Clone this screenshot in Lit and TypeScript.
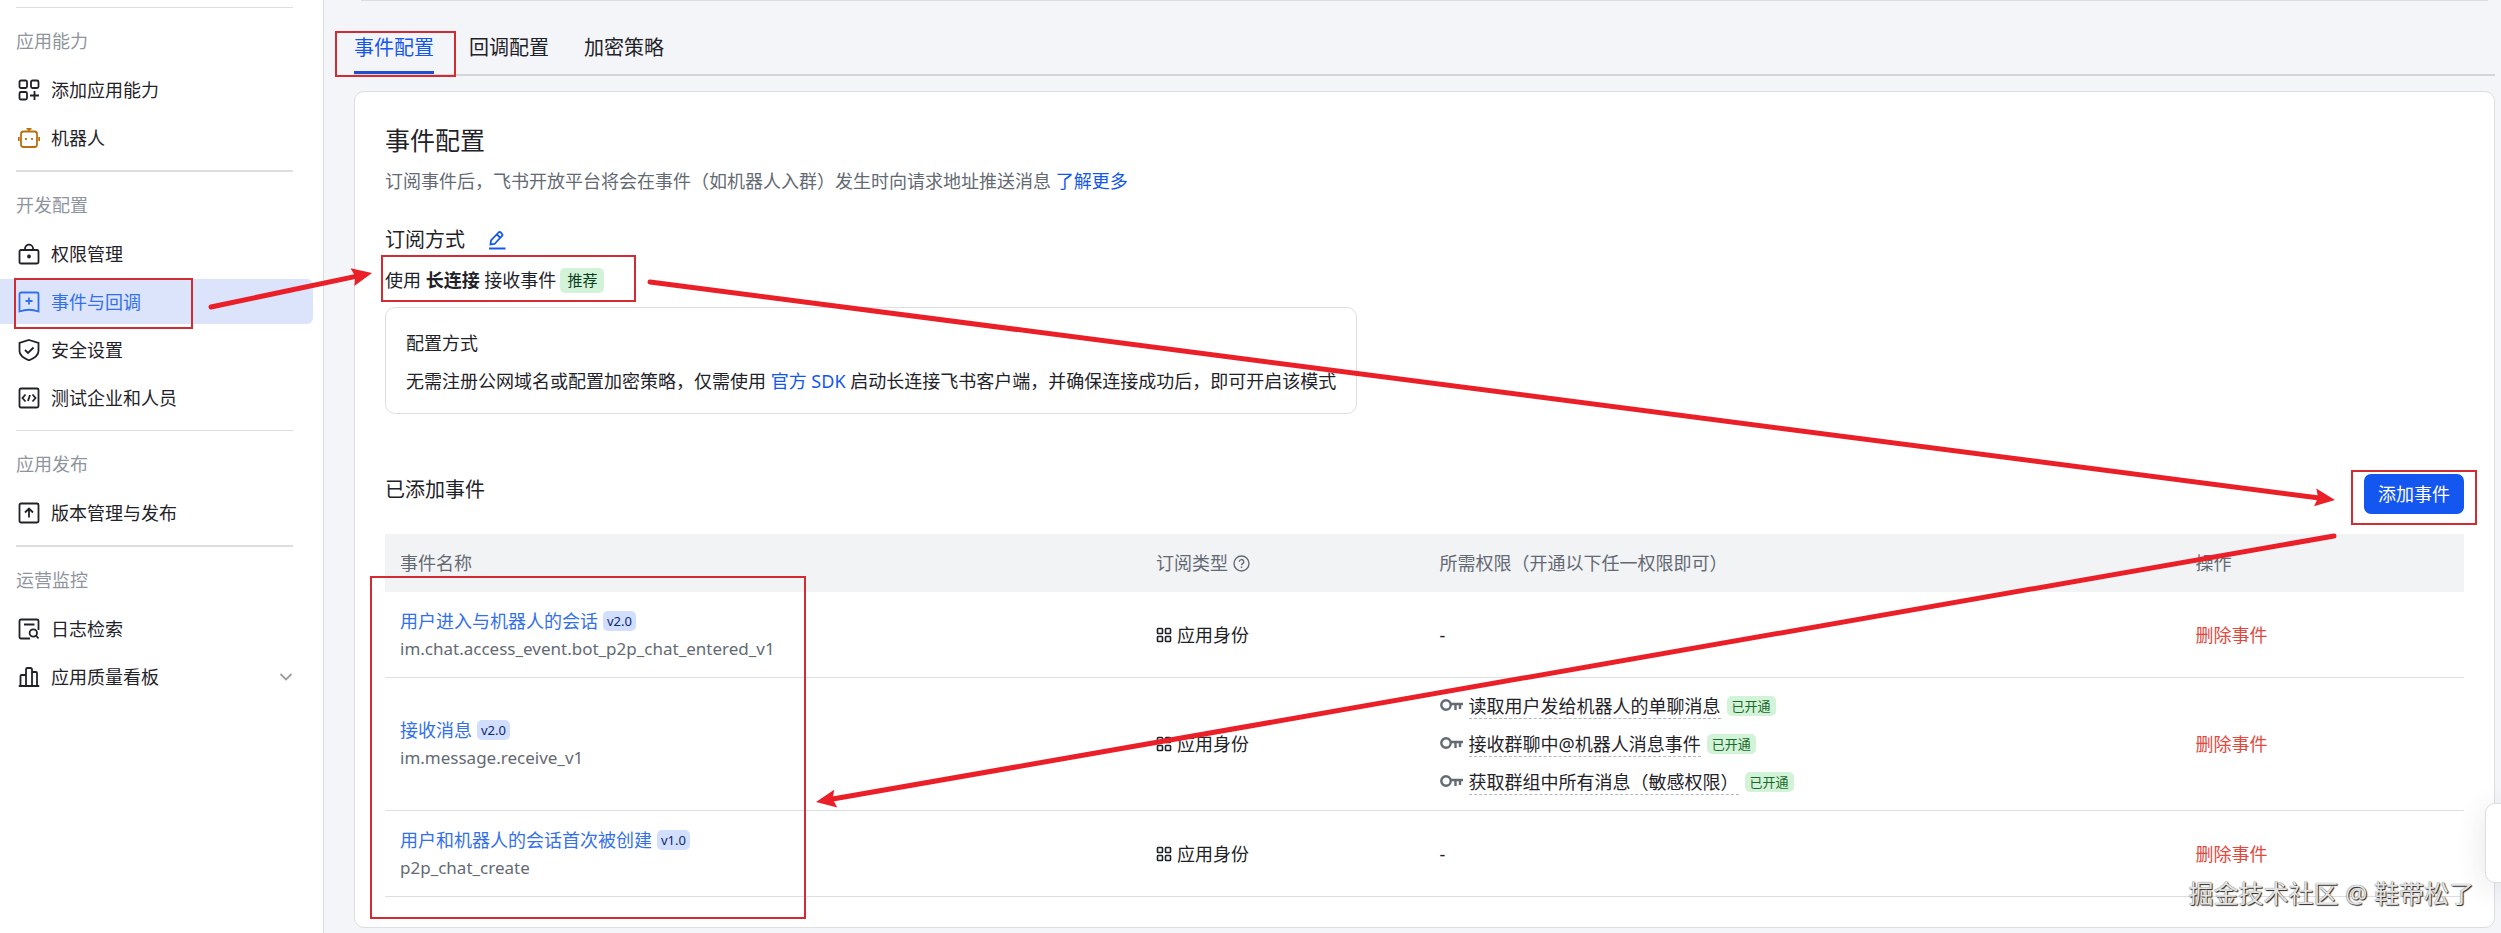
import { LitElement, html, css, svg, nothing } from "lit";
import { customElement } from "lit/decorators.js";

const icons: Record<string, unknown> = {
  add: svg`<rect x="1.500" y="1.500" width="7.500" height="7.500" rx="1.500"/><rect x="13" y="1.500" width="7.500" height="7.500" rx="1.500"/><rect x="1.500" y="13" width="7.500" height="7.500" rx="1.500"/><path d="M16.500 12v9M12 16.500h9"/>`,
  robot: svg`<rect x="3" y="4.500" width="16" height="15.500" rx="2.500"/><path d="M11 4.500V1.500M8.500 1.800h5M.8 10v4M21.200 10v4M8 11v2M14 11v2"/>`,
  lock: svg`<rect x="1.500" y="7" width="19" height="13.500" rx="1.500"/><path d="M7 7V5.500a4 3.800 0 0 1 8 0V7"/><circle cx="11" cy="13.500" r="1" fill="currentColor"/>`,
  event: svg`<path d="M1.500 20.500V3a1.500 1.500 0 0 1 1.500-1.500h16a1.500 1.500 0 0 1 1.500 1.500v17.500q-9.500-3.500-19 0zM11 6.500v7M7.500 10h7"/>`,
  shield: svg`<path d="M11 1l9.500 3v8c0 4.300-4.500 7.300-9.500 9.300-5-2-9.500-5-9.500-9.300V4zM7 11l3 3 5.500-5.500"/>`,
  code: svg`<rect x="1.500" y="1.500" width="19" height="19" rx="1.500"/><path d="M7.500 7.500L4.500 11l3 3.500M14.500 7.500l3 3.500-3 3.500M12 8l-2 6"/>`,
  upload: svg`<rect x="1.500" y="1.500" width="19" height="19" rx="1.500"/><path d="M11 15.500V7M7 10.500l4-4 4 4"/>`,
  log: svg`<path d="M12 20.500H3A1.500 1.500 0 0 1 1.500 19V3A1.500 1.500 0 0 1 3 1.500h16A1.500 1.500 0 0 1 20.500 3v9M6 6.500h10.500"/><circle cx="15.300" cy="15" r="3.700"/><path d="M18 17.500l2.500 3"/>`,
  chart: svg`<path d="M.8 20h20.400M2.500 20V10a1 1 0 0 1 1-1H8M8 20V3.500a1.500 1.500 0 0 1 1.500-1.500h3A1.500 1.500 0 0 1 14 3.500V20M14 6h4a1 1 0 0 1 1 1v13"/>`,
};

const groups = [
  { title: "应用能力", items: [["add", "添加应用能力"], ["robot", "机器人"]] },
  { title: "开发配置", items: [["lock", "权限管理"], ["event", "事件与回调"], ["shield", "安全设置"], ["code", "测试企业和人员"]] },
  { title: "应用发布", items: [["upload", "版本管理与发布"]] },
  { title: "运营监控", items: [["log", "日志检索"], ["chart", "应用质量看板"]] },
];

const events = [
  { name: "用户进入与机器人的会话", version: "v2.0", code: "im.chat.access_event.bot_p2p_chat_entered_v1", scopes: [] },
  { name: "接收消息", version: "v2.0", code: "im.message.receive_v1", scopes: ["读取用户发给机器人的单聊消息", "接收群聊中@机器人消息事件", "获取群组中所有消息（敏感权限）"] },
  { name: "用户和机器人的会话首次被创建", version: "v1.0", code: "p2p_chat_create", scopes: [] },
];

@customElement("side-nav")
class SideNav extends LitElement {
  static styles = css`
    :host { display: block; flex: 0 0 323px; background: #fff; border-right: 1px solid #d9dce1; padding-top: 7px; }
    .group { border-top: 1px solid #dcdee1; margin: 0 30px 0 16px; padding: 11px 0 10px; }
    .group:nth-of-type(even) { border-top-width: 2px; }
    h2 { margin: 0 0 3px; font-size: 18px; line-height: 45px; font-weight: 400; color: #8f959e; }
    ul { list-style: none; margin: 0 -20px 0 -16px; padding: 0; display: grid; gap: 3px; }
    a { display: flex; align-items: center; gap: 11px; height: 45px; padding: 0 20px 0 18px; font-size: 18px; color: #1f2329; text-decoration: none; border-radius: 0 6px 6px 0; }
    a.active { background: #dbe4fb; color: #3370eb; }
    svg { width: 22px; height: 22px; fill: none; stroke: currentColor; stroke-width: 1.8; }
    .robot { color: #b8700f; }
    .chev { width: 14px; height: 14px; margin-left: auto; color: #9a9da2; }
  `;
  render() {
    return html`<nav>${groups.map((g) => html`<section class="group"><h2>${g.title}</h2><ul>
      ${g.items.map(([icon, label]) => html`<li><a href="#" class=${icon === "event" ? "active" : ""}>
        <svg class=${icon} viewBox="0 0 22 22">${icons[icon]}</svg><span>${label}</span>
        ${icon === "chart" ? html`<svg class="chev" viewBox="0 0 14 14"><path d="M1.500 4l5.500 5.500L12.500 4"/></svg>` : nothing}
      </a></li>`)}</ul></section>`)}</nav>`;
  }
}

@customElement("event-table")
class EventTable extends LitElement {
  static styles = css`
    :host { display: block; }
    table { width: 100%; table-layout: fixed; border-collapse: separate; border-spacing: 0; font-size: 18px; }
    .wide { width: calc(100% * 8 / 22); }
    .slim { width: calc(100% * 3 / 22); }
    th { background: #f2f3f5; height: 58px; padding: 0 15px; text-align: left; font-weight: 400; color: #646a73; }
    td { height: 85px; padding: 0 15px; border-bottom: 1px solid #dcdee1; line-height: 28px; }
    .scopes { height: 132px; }
    .line { display: flex; align-items: center; gap: 5px; }
    .name { color: #3370eb; text-decoration: none; }
    .code { color: #646a73; font-size: 17px; }
    .version { background: #d1defd; color: #0c296e; font-size: 13px; line-height: 20px; padding: 0 4px; border-radius: 5px; }
    .open { background: #d2f3d8; color: #186a2a; font-size: 13px; line-height: 20px; padding: 0 5px; border-radius: 5px; }
    ul { list-style: none; margin: 0; padding: 0; display: grid; gap: 13px; }
    li { display: flex; align-items: center; gap: 6px; line-height: 24px; }
    .scope { border-bottom: 1px dashed #b5b9bf; }
    .delete { border: 0; background: none; padding: 0; font: inherit; color: #e2483d; }
    svg { fill: none; stroke: currentColor; }
    .grid { width: 16px; height: 16px; stroke-width: 1.6; }
    .key { width: 23px; height: 16px; stroke-width: 2.4; color: #646a73; }
    .help { width: 17px; height: 17px; stroke-width: 1.4; }
  `;
  render() {
    return html`<table>
      <colgroup><col class="wide" /><col class="slim" /><col class="wide" /><col class="slim" /></colgroup>
      <thead><tr>
        <th>事件名称</th>
        <th><div class="line">订阅类型<svg class="help" viewBox="0 0 17 17"><circle cx="8.500" cy="8.500" r="7.500"/><path d="M6.300 6.800a2.200 2.200 0 1 1 3.300 1.900c-.8.500-1.100.8-1.100 1.600M8.500 11.500v1.400"/></svg></div></th>
        <th>所需权限（开通以下任一权限即可）</th>
        <th>操作</th>
      </tr></thead>
      <tbody>${events.map((e) => html`<tr>
        <td><div class="line"><a class="name" href="#">${e.name}</a><span class="version">${e.version}</span></div><div class="code">${e.code}</div></td>
        <td><div class="line"><svg class="grid" viewBox="0 0 16 16"><rect x="1.500" y="1.500" width="5" height="5" rx=".8"/><rect x="9.500" y="1.500" width="5" height="5" rx=".8"/><rect x="1.500" y="9.500" width="5" height="5" rx=".8"/><rect x="9.500" y="9.500" width="5" height="5" rx=".8"/></svg>应用身份</div></td>
        ${e.scopes.length
          ? html`<td class="scopes"><ul>${e.scopes.map((s) => html`<li><svg class="key" viewBox="0 0 23 16"><circle cx="6" cy="7" r="4.700"/><path d="M10.700 6H23M15.500 6v6M20 6v5"/></svg><span class="scope">${s}</span><span class="open">已开通</span></li>`)}</ul></td>`
          : html`<td>-</td>`}
        <td><button class="delete" type="button">删除事件</button></td>
      </tr>`)}</tbody>
    </table>`;
  }
}

@customElement("guide-marks")
class GuideMarks extends LitElement {
  static styles = css`
    :host { position: absolute; inset: 0; pointer-events: none; }
    svg { display: block; width: 2501px; height: 933px; }
    .box { fill: none; stroke: #d22b31; stroke-width: 2; }
    .shaft { stroke: #ea1f28; stroke-width: 5; stroke-linecap: round; }
    .head { fill: #ea1f28; }
  `;
  boxes = [[15, 279, 177, 49], [336, 32, 119, 44], [382, 256, 253, 45], [2352, 471, 124, 53], [371, 577, 434, 341]];
  arrows = [[211, 307, 372, 273], [650, 282, 2335, 500], [2334, 536, 816, 802]];
  render() {
    return html`<svg viewBox="0 0 2501 933" aria-hidden="true">
      ${this.boxes.map(([x, y, w, h]) => svg`<rect class="box" x=${x} y=${y} width=${w} height=${h}/>`)}
      ${this.arrows.map(([x1, y1, x2, y2]) => {
        const a = Math.atan2(y2 - y1, x2 - x1);
        const turn = (a * 180) / Math.PI;
        return svg`<line class="shaft" x1=${x1} y1=${y1} x2=${x2 - 14 * Math.cos(a)} y2=${y2 - 14 * Math.sin(a)}/>
          <path class="head" d="M0 0L-20 -9L-17 0L-20 9Z" transform="translate(${x2} ${y2}) rotate(${turn})"/>`;
      })}
    </svg>`;
  }
}

@customElement("app-root")
class AppRoot extends LitElement {
  static styles = css`
    :host { display: flex; position: relative; min-height: 100vh; overflow: hidden; background: #f4f5f8; color: #1f2329; font-family: "Noto Sans", "Noto Sans CJK SC", sans-serif; font-size: 18px; line-height: 28px; }
    main { flex: 1; min-width: 0; padding: 0 6px 5px 30px; display: flex; flex-direction: column; }
    .prev { height: 1px; margin: 0 7px; background: #dadcdf; }
    .tabs { display: flex; gap: 35px; border-bottom: 2px solid #d3d5d8; padding-top: 20px; margin-bottom: 15px; }
    .tab { font-size: 20px; line-height: 53px; color: #1f2329; text-decoration: none; }
    .tab.on { color: #1456f0; background: linear-gradient(#1f4fd0, #1f4fd0) bottom / 100% 3px no-repeat; }
    .card { background: #fff; border: 1px solid #dcdee1; border-radius: 10px; padding: 30px; }
    h1 { margin: 0; font-size: 25px; line-height: 36px; font-weight: 400; }
    h2 { margin: 0; font-size: 20px; line-height: 32px; font-weight: 400; }
    p { margin: 0; }
    .desc { color: #646a73; padding-top: 9px; }
    .link { color: #1456f0; text-decoration: none; }
    .mode { display: flex; align-items: center; gap: 22px; padding-top: 29px; }
    .edit { border: 0; padding: 0; background: none; color: #1456f0; width: 20px; height: 20px; }
    .edit svg { display: block; width: 20px; height: 20px; fill: none; stroke: currentColor; stroke-width: 1.8; }
    .use { display: flex; align-items: center; gap: 4px; padding-top: 10px; }
    .rec { background: #d2f3d8; color: #0b3d1c; font-size: 15px; line-height: 25px; padding: 0 7px; border-radius: 5px; }
    .config { width: fit-content; box-sizing: border-box; min-width: 970px; margin-top: 13px; border: 1px solid #dcdee1; border-radius: 10px; padding: 21px 20px 18px; display: grid; gap: 10px; }
    .bar { display: flex; align-items: flex-start; justify-content: space-between; margin: 60px 0 20px; }
    .add { border: 0; border-radius: 7px; background: #1456f0; color: #fff; font: inherit; height: 40px; padding: 0 14px; }
    .float { position: absolute; right: -10px; top: 803px; width: 24px; height: 78px; background: #fff; border: 1px solid #dcdee1; border-radius: 10px; box-shadow: 0 5px 30px rgba(31, 35, 41, 0.12); }
    .mark { position: absolute; right: 27px; top: 874px; font-size: 25px; line-height: 38px; color: #e4e4e4; text-shadow: 1px 1px 1px #222, 0 0 1px #555; }
  `;
  render() {
    return html`<side-nav></side-nav>
      <main>
        <div class="prev"></div>
        <nav class="tabs"><a class="tab on" href="#">事件配置</a><a class="tab" href="#">回调配置</a><a class="tab" href="#">加密策略</a></nav>
        <section class="card">
          <h1>事件配置</h1>
          <p class="desc">订阅事件后，飞书开放平台将会在事件（如机器人入群）发生时向请求地址推送消息 <a class="link" href="#">了解更多</a></p>
          <div class="mode"><h2>订阅方式</h2><button class="edit" type="button" aria-label="编辑"><svg viewBox="0 0 20 20"><path d="M3.500 14.500L4 10.500 11.500 2.500a1.500 1.500 0 0 1 2.200 0l1.300 1.300a1.500 1.500 0 0 1 0 2.200L7.500 14zM10 4.500L13 7.500M2 18.500h16.500"/></svg></button></div>
          <div class="use"><span>使用 <b>长连接</b> 接收事件</span><span class="rec">推荐</span></div>
          <div class="config"><p>配置方式</p><p>无需注册公网域名或配置加密策略，仅需使用 <a class="link" href="#">官方 SDK</a> 启动长连接飞书客户端，并确保连接成功后，即可开启该模式</p></div>
          <div class="bar"><h2>已添加事件</h2><button class="add" type="button">添加事件</button></div>
          <event-table></event-table>
        </section>
      </main>
      <div class="float"></div>
      <guide-marks></guide-marks>
      <div class="mark">掘金技术社区 @ 鞋带松了</div>`;
  }
}
